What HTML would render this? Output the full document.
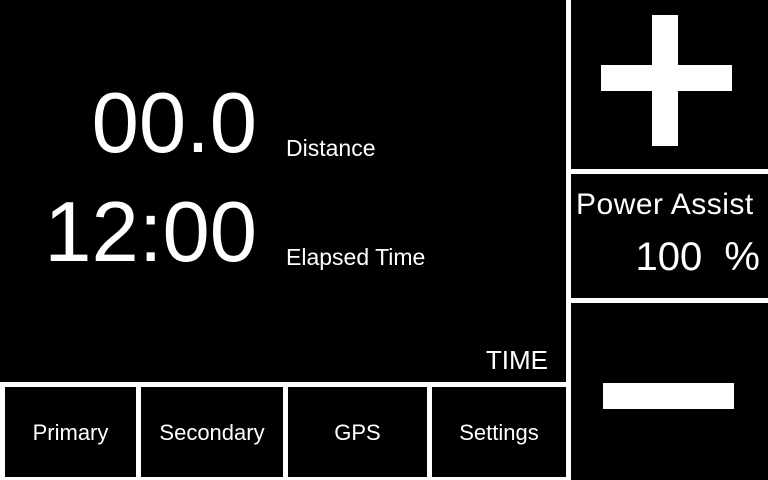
<!DOCTYPE html>
<html><head><style>
html,body{margin:0;padding:0;background:#000;width:768px;height:480px;overflow:hidden;position:relative;font-family:"Liberation Sans",sans-serif;color:#fff}
.w{position:absolute;background:#fff}
.t{position:absolute;white-space:nowrap;line-height:1}
.btn{position:absolute;background:#000;top:387px;height:90px;display:flex;align-items:center;justify-content:center;font-size:22px;padding-top:2px;box-sizing:border-box}
</style></head><body>
<div class="w" style="left:566px;top:0;width:5px;height:480px"></div>
<div class="w" style="left:571px;top:169px;width:197px;height:5px"></div>
<div class="w" style="left:571px;top:298px;width:197px;height:5px"></div>
<div class="w" style="left:0;top:382px;width:566px;height:98px"></div>
<div class="btn" style="left:5px;width:131px">Primary</div>
<div class="btn" style="left:141px;width:142px">Secondary</div>
<div class="btn" style="left:288px;width:139px">GPS</div>
<div class="btn" style="left:432px;width:134px">Settings</div>
<div class="w" style="left:652px;top:15px;width:26px;height:131px"></div>
<div class="w" style="left:601px;top:65px;width:131px;height:26px"></div>
<div class="w" style="left:603px;top:383px;width:131px;height:26px"></div>
<div class="t" style="right:511px;top:81px;font-size:85px">00.0</div>
<div class="t" style="right:511px;top:190px;font-size:85px">12:00</div>
<div class="t" style="left:286px;top:137px;font-size:23px">Distance</div>
<div class="t" style="left:286px;top:246px;font-size:23px">Elapsed Time</div>
<div class="t" style="right:220px;top:347px;font-size:26px">TIME</div>
<div class="t" style="left:576px;top:190px;font-size:30px;letter-spacing:0.5px">Power Assist</div>
<div class="t" style="right:8px;top:237px;font-size:40px">100&nbsp;&nbsp;%</div>
</body></html>
